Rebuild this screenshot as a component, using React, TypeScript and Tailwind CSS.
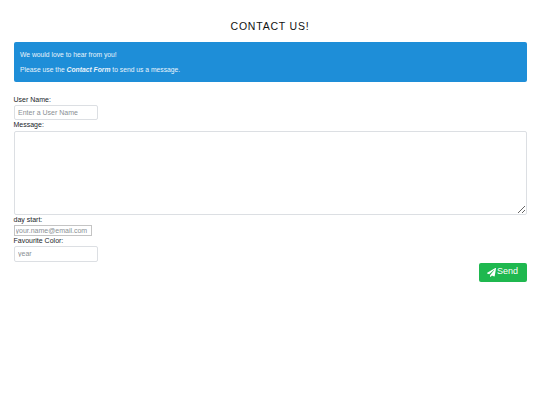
import React from 'react'

function PlaneIcon() {
  return (
    <svg viewBox="0 0 512 512" className="w-[9px] h-[9px] fill-white">
      <path d="M476 3.2L12.5 270.6c-18.1 10.4-15.8 35.6 2.2 43.2L121 358.4l287.3-253.2c5.5-4.9 13.3 2.6 8.6 8.3L176 407v80.5c0 23.6 28.5 32.9 42.5 15.8L282 426l124.6 52.2c14.2 6 30.4-2.9 33-18.2l72-432C515 7.8 493.3-6.8 476 3.2z" />
    </svg>
  )
}

export default function App() {
  return (
    <div className="min-h-[405px] bg-white px-[13.5px] font-['Liberation_Sans',sans-serif] text-[7px] text-[#212529] antialiased">
      {/* Header */}
      <h1 className="pt-[20px] pb-[1px] text-center text-[10.5px] leading-[13px] tracking-[0.8px] text-[#111]">CONTACT US!</h1>

      <div className="mt-[8px] h-[40px] rounded-[2px] bg-[#1e8ed8] px-[6.5px] pt-[8px] text-[6.75px] text-[#e8f3fb]">
        <p className="leading-[9px]">We would love to hear from you!</p>
        <p className="mt-[5.5px] leading-[9px]">
          Please use the <b className="italic">Contact Form</b> to send us a message.
        </p>
      </div>

      {/* Form */}
      <form className="mt-[13px]">
        <label className="block leading-[9px]">User Name:</label>
        <input
          placeholder="Enter a User Name"
          className="mt-[1px] block h-[15px] w-[84px] rounded-[2px] border border-[#dcdfe3] px-[3.5px] text-[7px] outline-none placeholder:text-[#8a8f94]"
        />
        <label className="block leading-[9px]">Message:</label>
        <textarea className="mt-[1.5px] block h-[84px] w-full rounded-[2px] border border-[#dcdfe3] outline-none" />
        <label className="block leading-[9px]">day start:</label>
        <input
          placeholder="your.name@email.com"
          className="mt-[1px] block h-[11px] w-[78px] border border-[#c4c4c4] px-[1px] text-[7px] outline-none placeholder:text-[#8a8f94]"
        />
        <label className="block leading-[9px]">Favourite Color:</label>
        <input
          placeholder="year"
          className="mt-[1px] block h-[16px] w-[84px] rounded-[2px] border border-[#dcdfe3] px-[3.5px] text-[7px] outline-none placeholder:text-[#8a8f94]"
        />
        <div className="mt-[1px] flex justify-end">
          <button type="button" className="flex h-[19px] w-[48px] items-center justify-center gap-[1px] rounded-[2px] bg-[#1fb84f] text-[9px] text-white">
            <PlaneIcon />
            Send
          </button>
        </div>
      </form>
    </div>
  )
}
